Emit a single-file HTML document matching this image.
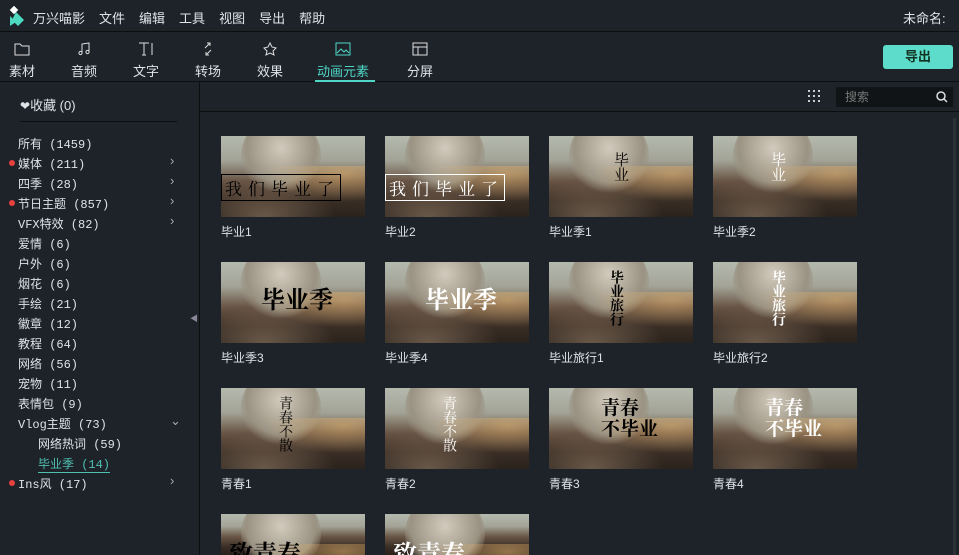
<html style="overflow:hidden;height:555px"><head><style>
html,body{overflow:hidden}
body{margin:0;width:959px;height:555px;background:#1e232a;font-family:"Liberation Sans","Noto Sans CJK SC",sans-serif;color:#dfe3e6;position:relative;font-size:12px}
.a{position:absolute;white-space:nowrap}
.menu span{margin-right:14px;font-size:13px}
.tb{position:absolute;top:42px;text-align:center;width:50px;font-size:13px}
.tb svg{display:block;margin:0 auto 5px}
.cat{position:absolute;left:18px;font-size:12px;font-family:"Liberation Mono","Noto Sans CJK SC",monospace}
.dot{position:absolute;left:-9px;top:5px;width:6px;height:6px;border-radius:3px;background:#e8403f}
.chev{position:absolute;left:170px;color:#aaa;font-size:13px}
.th{position:absolute;width:144px;height:81px;overflow:hidden;background:linear-gradient(180deg,#b4b9ae 0%,#a3a497 30%,#6a5646 55%,#3a2e25 80%,#2a221c 100%)}
.th:before{content:"";position:absolute;left:20px;top:-20px;width:80px;height:80px;border-radius:40px;background:radial-gradient(circle at 50% 40%,#d2cbbd,#9a9282 55%,rgba(90,80,70,0) 72%)}
.th:after{content:"";position:absolute;left:0;top:30px;width:144px;height:51px;background:radial-gradient(ellipse at 85% 15%,rgba(230,180,110,.55),rgba(0,0,0,0) 45%),radial-gradient(ellipse at 30% 100%,rgba(200,170,140,.4),rgba(0,0,0,0) 50%)}
.th b{position:absolute;z-index:2;font-family:"Noto Serif CJK SC",serif;font-weight:700}
.lb{position:absolute;font-size:12px;color:#dfe3e6}
</style></head><body>
<div class="a" style="left:0;top:0;width:959px;height:31px;background:#1e232a;border-bottom:1px solid #0c0e10"></div>
<svg class="a" style="left:8px;top:6px" width="16" height="20"><rect x="3" y="1" width="6" height="6" fill="#fff" transform="rotate(45 6 4)"/><path d="M2 10 L8 16 L2 20 Z M8 6 L16 14 L10 20 L4 14Z" fill="#4dd9c0"/></svg>
<div class="a menu" style="left:33px;top:8px"><span>万兴喵影</span><span>文件</span><span>编辑</span><span>工具</span><span>视图</span><span>导出</span><span>帮助</span></div>
<div class="a" style="left:903px;top:8px;font-size:13px">未命名:</div>
<div class="a" style="left:0;top:81px;width:959px;height:1px;background:#0c0e10"></div>
<div class="tb" style="left:-3px"><svg width="16" height="14"><path d="M1 2h5l2 2h7v9H1z" fill="none" stroke="#ddd"/></svg>素材</div>
<div class="tb" style="left:59px"><svg width="16" height="14"><path d="M6 11V2l7-1v9" fill="none" stroke="#ddd"/><circle cx="4.5" cy="11" r="1.6" fill="none" stroke="#ddd"/><circle cx="11.5" cy="10" r="1.6" fill="none" stroke="#ddd"/></svg>音频</div>
<div class="tb" style="left:121px"><svg width="16" height="14"><path d="M1 1h10M6 1v12M4 13h4M14 1v12" fill="none" stroke="#ddd"/></svg>文字</div>
<div class="tb" style="left:183px"><svg width="16" height="14"><path d="M5 6l5-5M7 1h3v3M11 8l-5 5M6 10v3h3" fill="none" stroke="#ddd"/></svg>转场</div>
<div class="tb" style="left:245px"><svg width="16" height="14"><path d="M8 1l2 4 4 1-3 3 1 4-4-2-4 2 1-4-3-3 4-1z" fill="none" stroke="#ddd"/></svg>效果</div>
<div class="tb" style="left:310px;width:66px;color:#4fd6c6"><svg width="16" height="14"><rect x="1" y="1" width="14" height="12" fill="none" stroke="#4fd6c6"/><path d="M2 11l4-4 3 3 2-2 3 3" fill="none" stroke="#4fd6c6"/></svg>动画元素</div>
<div class="a" style="left:315px;top:80px;width:60px;height:2px;background:#4fd6c6"></div>
<div class="tb" style="left:395px"><svg width="16" height="14"><rect x="1" y="1" width="14" height="12" fill="none" stroke="#ddd"/><path d="M1 5h14M6 5v8" stroke="#ddd"/></svg>分屏</div>
<div class="a" style="left:883px;top:45px;width:70px;height:24px;background:#5ddbcb;border-radius:3px;color:#132;text-align:center;line-height:24px;font-weight:bold;font-size:13px">导出</div>
<div class="a" style="left:199px;top:82px;width:1px;height:473px;background:#0c0e10"></div>
<div class="a" style="left:200px;top:111px;width:759px;height:1px;background:#0c0e10"></div>
<div class="a" style="left:20px;top:95px;font-size:13px"><span style="font-size:12px">❤</span>收藏 (0)</div>
<div class="a" style="left:20px;top:121px;width:157px;height:1px;background:#0c0e10"></div>
<svg class="a" style="left:808px;top:90px" width="13" height="13"><g fill="#ccc"><rect x="0" y="0" width="2" height="2"/><rect x="5" y="0" width="2" height="2"/><rect x="10" y="0" width="2" height="2"/><rect x="0" y="5" width="2" height="2"/><rect x="5" y="5" width="2" height="2"/><rect x="10" y="5" width="2" height="2"/><rect x="0" y="10" width="2" height="2"/><rect x="5" y="10" width="2" height="2"/><rect x="10" y="10" width="2" height="2"/></g></svg>
<div class="a" style="left:836px;top:87px;width:117px;height:20px;background:#111416;color:#777;font-size:12px;line-height:20px;padding-left:9px;box-sizing:border-box">搜索<svg style="position:absolute;right:5px;top:4px" width="12" height="12"><circle cx="5" cy="5" r="4" fill="none" stroke="#ddd" stroke-width="1.5"/><path d="M8 8l3 3" stroke="#ddd" stroke-width="1.5"/></svg></div>
<div class="a" style="left:953px;top:118px;width:3px;height:437px;background:#2c3138"></div>
<div class="cat" style="top:135px">所有 (1459)</div>
<div class="cat" style="top:155px"><i class="dot"></i>媒体 (211)</div><div class="chev" style="top:153px">›</div>
<div class="cat" style="top:175px">四季 (28)</div><div class="chev" style="top:173px">›</div>
<div class="cat" style="top:195px"><i class="dot"></i>节日主题 (857)</div><div class="chev" style="top:193px">›</div>
<div class="cat" style="top:215px">VFX特效 (82)</div><div class="chev" style="top:213px">›</div>
<div class="cat" style="top:235px">爱情 (6)</div>
<div class="cat" style="top:255px">户外 (6)</div>
<div class="cat" style="top:275px">烟花 (6)</div>
<div class="cat" style="top:295px">手绘 (21)</div>
<div class="cat" style="top:315px">徽章 (12)</div>
<div class="cat" style="top:335px">教程 (64)</div>
<div class="cat" style="top:355px">网络 (56)</div>
<div class="cat" style="top:375px">宠物 (11)</div>
<div class="cat" style="top:395px">表情包 (9)</div>
<div class="cat" style="top:415px">Vlog主题 (73)</div><div class="chev" style="top:413px">⌄</div>
<div class="cat" style="top:435px;left:38px">网络热词 (59)</div>
<div class="cat" style="top:455px;left:38px;color:#4fbfb0;border-bottom:1px solid #4fbfb0">毕业季 (14)</div>
<div class="cat" style="top:475px"><i class="dot"></i>Ins风 (17)</div><div class="chev" style="top:473px">›</div>
<div class="a" style="left:190px;top:313px;color:#889;font-size:8px">◀</div>

<div class="th" style="left:221px;top:136px"><b style="left:0px;top:38px;font-size:17px;color:#000;letter-spacing:6px;border:1px solid #000;font-weight:400;padding-left:3px">我们毕业了</b></div>
<div class="th" style="left:385px;top:136px"><b style="left:0px;top:38px;font-size:17px;color:#fff;letter-spacing:6px;border:1px solid #fff;font-weight:400;padding-left:3px">我们毕业了</b></div>
<div class="th" style="left:549px;top:136px"><b style="left:62px;top:16px;font-size:15px;color:#000;writing-mode:vertical-rl;font-weight:400">毕业</b></div>
<div class="th" style="left:713px;top:136px"><b style="left:55px;top:16px;font-size:15px;color:#fff;writing-mode:vertical-rl;font-weight:400">毕业</b></div>
<div class="th" style="left:221px;top:262px"><b style="left:40px;top:18px;font-size:24px;color:#000">毕业季</b></div>
<div class="th" style="left:385px;top:262px"><b style="left:40px;top:18px;font-size:24px;color:#fff">毕业季</b></div>
<div class="th" style="left:549px;top:262px"><b style="left:60px;top:8px;font-size:14px;color:#000;writing-mode:vertical-rl;line-height:16px">毕业旅行</b></div>
<div class="th" style="left:713px;top:262px"><b style="left:58px;top:8px;font-size:14px;color:#fff;writing-mode:vertical-rl;line-height:16px">毕业旅行</b></div>
<div class="th" style="left:221px;top:388px"><b style="left:55px;top:8px;font-size:14px;color:#000;writing-mode:vertical-rl;font-weight:400">青春不散</b></div>
<div class="th" style="left:385px;top:388px"><b style="left:55px;top:8px;font-size:14px;color:#fff;writing-mode:vertical-rl;font-weight:400">青春不散</b></div>
<div class="th" style="left:549px;top:388px"><b style="left:52px;top:8px;font-size:19px;color:#000;line-height:21px">青春<br>不毕业</b></div>
<div class="th" style="left:713px;top:388px"><b style="left:52px;top:8px;font-size:19px;color:#fff;line-height:21px">青春<br>不毕业</b></div>
<div class="th" style="left:221px;top:514px;height:41px"><b style="left:8px;top:20px;font-size:24px;color:#000">致青春</b></div>
<div class="th" style="left:385px;top:514px;height:41px"><b style="left:8px;top:20px;font-size:24px;color:#fff">致青春</b></div>

<div class="lb" style="left:221px;top:223px">毕业1</div><div class="lb" style="left:385px;top:223px">毕业2</div><div class="lb" style="left:549px;top:223px">毕业季1</div><div class="lb" style="left:713px;top:223px">毕业季2</div>
<div class="lb" style="left:221px;top:349px">毕业季3</div><div class="lb" style="left:385px;top:349px">毕业季4</div><div class="lb" style="left:549px;top:349px">毕业旅行1</div><div class="lb" style="left:713px;top:349px">毕业旅行2</div>
<div class="lb" style="left:221px;top:475px">青春1</div><div class="lb" style="left:385px;top:475px">青春2</div><div class="lb" style="left:549px;top:475px">青春3</div><div class="lb" style="left:713px;top:475px">青春4</div>
</body></html>
